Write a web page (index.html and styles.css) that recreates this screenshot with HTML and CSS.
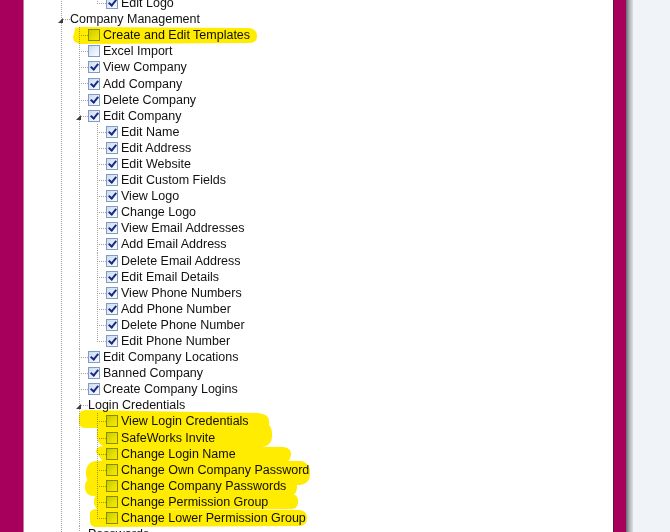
FILE: index.html
```html
<!DOCTYPE html>
<html lang="en">
<head>
<meta charset="UTF-8" />
<meta name="viewport" content="width=device-width, initial-scale=1" />
<title>Permissions</title>
<link rel="stylesheet" href="styles.css">
</head>
<body>
<div class="frame">
  <aside class="nav"></aside>

  <main class="panel">
    <ul class="tree">
      <!-- tail of the section above -->
      <li class="ghost">
        <ul>
          <li class="ghost end">
            <ul>
              <li><div class="row"><span class="elbow"></span><span class="cb on"></span>Edit Logo</div></li>
            </ul>
          </li>
        </ul>
      </li>

      <li class="more">
        <div class="row"><span class="elbow open"></span>Company Management</div>
        <ul>
          <li><div class="row"><span class="elbow"></span><span class="cb"></span>Create and Edit Templates</div></li>
          <li><div class="row"><span class="elbow"></span><span class="cb"></span>Excel Import</div></li>
          <li><div class="row"><span class="elbow"></span><span class="cb on"></span>View Company</div></li>
          <li><div class="row"><span class="elbow"></span><span class="cb on"></span>Add Company</div></li>
          <li><div class="row"><span class="elbow"></span><span class="cb on"></span>Delete Company</div></li>
          <li>
            <div class="row"><span class="elbow open"></span><span class="cb on"></span>Edit Company</div>
            <ul>
              <li><div class="row"><span class="elbow"></span><span class="cb on"></span>Edit Name</div></li>
              <li><div class="row"><span class="elbow"></span><span class="cb on"></span>Edit Address</div></li>
              <li><div class="row"><span class="elbow"></span><span class="cb on"></span>Edit Website</div></li>
              <li><div class="row"><span class="elbow"></span><span class="cb on"></span>Edit Custom Fields</div></li>
              <li><div class="row"><span class="elbow"></span><span class="cb on"></span>View Logo</div></li>
              <li><div class="row"><span class="elbow"></span><span class="cb on"></span>Change Logo</div></li>
              <li><div class="row"><span class="elbow"></span><span class="cb on"></span>View Email Addresses</div></li>
              <li><div class="row"><span class="elbow"></span><span class="cb on"></span>Add Email Address</div></li>
              <li><div class="row"><span class="elbow"></span><span class="cb on"></span>Delete Email Address</div></li>
              <li><div class="row"><span class="elbow"></span><span class="cb on"></span>Edit Email Details</div></li>
              <li><div class="row"><span class="elbow"></span><span class="cb on"></span>View Phone Numbers</div></li>
              <li><div class="row"><span class="elbow"></span><span class="cb on"></span>Add Phone Number</div></li>
              <li><div class="row"><span class="elbow"></span><span class="cb on"></span>Delete Phone Number</div></li>
              <li><div class="row"><span class="elbow"></span><span class="cb on"></span>Edit Phone Number</div></li>
            </ul>
          </li>
          <li><div class="row"><span class="elbow"></span><span class="cb on"></span>Edit Company Locations</div></li>
          <li><div class="row"><span class="elbow"></span><span class="cb on"></span>Banned Company</div></li>
          <li><div class="row"><span class="elbow"></span><span class="cb on"></span>Create Company Logins</div></li>
          <li>
            <div class="row"><span class="elbow open"></span>Login Credentials</div>
            <ul>
              <li><div class="row"><span class="elbow"></span><span class="cb"></span>View Login Credentials</div></li>
              <li><div class="row"><span class="elbow"></span><span class="cb"></span>SafeWorks Invite</div></li>
              <li><div class="row"><span class="elbow"></span><span class="cb"></span>Change Login Name</div></li>
              <li><div class="row"><span class="elbow"></span><span class="cb"></span>Change Own Company Password</div></li>
              <li><div class="row"><span class="elbow"></span><span class="cb"></span>Change Company Passwords</div></li>
              <li><div class="row"><span class="elbow"></span><span class="cb"></span>Change Permission Group</div></li>
              <li><div class="row"><span class="elbow"></span><span class="cb"></span>Change Lower Permission Group</div></li>
            </ul>
          </li>
          <li><div class="row"><span class="elbow open"></span>Passwords</div></li>
        </ul>
      </li>
    </ul>

    <!-- marker strokes drawn over the screenshot -->
    <svg class="marker" viewBox="24 0 589 532" width="589" height="532">
      <g fill="#ffec00">
        <path d="M75 29 Q74 27 82 27 L249 28 Q257 29 257 36 Q257 43 249 43 L82 44 Q73 44 73 37 Z"/>
        <path d="M79 416 Q79 410 86 410 L258 413 Q269 414 269 421 L269 427 L86 428 Q79 428 79 422 Z"/>
        <rect x="97" y="422" width="175" height="25" rx="10"/>
        <path d="M96 452 Q96 446 104 446 L284 447 Q292 449 291 455 Q290 463 282 463 L104 463 Z"/>
        <rect x="86" y="461" width="224" height="24" rx="10"/>
        <rect x="85" y="478" width="212" height="18" rx="8"/>
        <rect x="94" y="494" width="204" height="15" rx="6"/>
        <path d="M90 515 Q89 509 97 509 L300 510 Q307 511 307 518 Q307 526 299 526 L97 527 Q90 527 90 521 Z"/>
      </g>
    </svg>
  </main>

  <div class="splitter"></div>
  <div class="shade"></div>
  <section class="pane"></section>
</div>
</body>
</html>
```

FILE: styles.css
```css
body {
  margin: 0;
  font-family: "Liberation Sans", Arial, sans-serif;
  font-size: 12.5px;
  color: #111;
  overflow: hidden;
}
.frame {
  display: flex;
  height: 532px;
}
.nav {
  flex: none;
  width: 23px;
  background: #a6005c;
  border-right: 1px solid #c9789f;
}
.panel {
  flex: none;
  width: 589px;
  background: #fff;
  overflow: hidden;
  position: relative;
}
.splitter {
  flex: none;
  width: 12px;
  background: #a6005c;
  border-left: 1px solid #5a1437;
}
.shade {
  flex: none;
  width: 7px;
  background: linear-gradient(to right, #66686a, #a9adb1 45%, #dde1e5);
}
.pane {
  flex: 1;
  background: #f0f4f9;
}

/* tree */
.tree,
.tree ul {
  list-style: none;
  margin: 0;
  padding: 0;
}
.tree {
  padding-left: 28px;
  margin-top: -5px;
}
.tree ul {
  margin-left: 18px;
}
.tree li {
  background: repeating-linear-gradient(to bottom, #a4a4a4 0 1px, transparent 1px 2px) 9px 0 / 1px 100% no-repeat;
}
.tree li:last-child {
  background-size: 1px 9px;
}
.tree li.more {
  background-size: 1px 100%;
}
.tree li.end {
  background: none;
}
.row {
  display: flex;
  align-items: center;
  height: 16.1px;
  white-space: nowrap;
  background: repeating-linear-gradient(to right, #a4a4a4 0 1px, transparent 1px 2px) 9px 8px / 9px 1px no-repeat;
}
.elbow {
  flex: none;
  width: 18px;
  height: 100%;
}
.elbow.open::before {
  content: "";
  display: block;
  width: 0;
  height: 0;
  margin: 7px 0 0 6px;
  border-left: 5px solid transparent;
  border-bottom: 5px solid #3c3c3c;
}
.cb {
  flex: none;
  box-sizing: border-box;
  width: 12px;
  height: 12px;
  margin-right: 3px;
  border: 1px solid #7f9bc6;
  background: linear-gradient(135deg, #c9daf0, #eef4fb 70%, #f8fbfe);
}
.cb.on::after {
  content: "";
  display: block;
  width: 3px;
  height: 6px;
  margin: 0 0 0 3px;
  border: solid #1b2a82;
  border-width: 0 2px 2px 0;
  transform: rotate(40deg);
}

/* highlighter */
.marker {
  position: absolute;
  left: 0;
  top: 0;
  pointer-events: none;
  mix-blend-mode: multiply;
}
```
